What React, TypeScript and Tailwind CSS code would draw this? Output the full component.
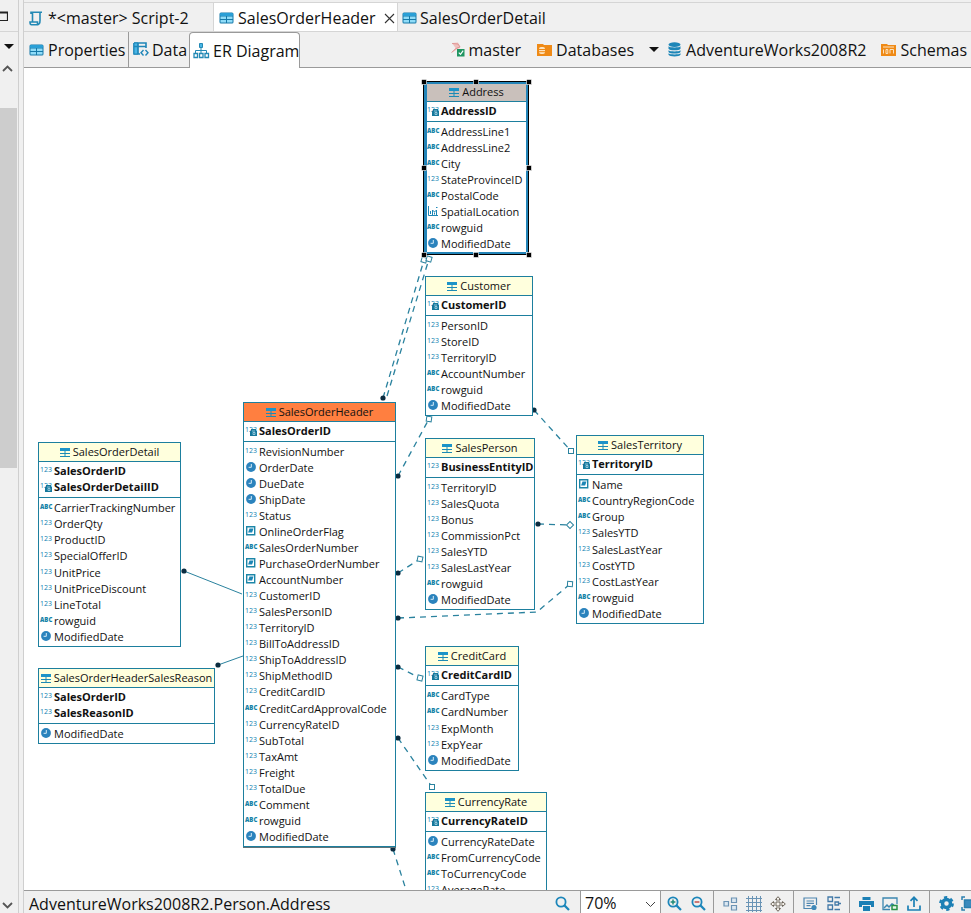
import React from 'react';

type ColumnType = 'num' | 'key' | 'text' | 'date' | 'user' | 'geo';

interface Column {
  name: string;
  type: ColumnType;
}

interface Entity {
  name: string;
  x: number;
  y: number;
  width: number;
  height: number;
  headerClass: string;
  selected?: boolean;
  keys: Column[];
  columns: Column[];
}

const col = (name: string, type: ColumnType): Column => ({ name, type });

const YELLOW = 'bg-[#ffffdd]';

const entities: Entity[] = [
  {
    name: 'Address', x: 401, y: 14, width: 103, height: 172, headerClass: 'bg-[#c9c0bb]', selected: true,
    keys: [col('AddressID', 'key')],
    columns: [
      col('AddressLine1', 'text'),
      col('AddressLine2', 'text'),
      col('City', 'text'),
      col('StateProvinceID', 'num'),
      col('PostalCode', 'text'),
      col('SpatialLocation', 'geo'),
      col('rowguid', 'text'),
      col('ModifiedDate', 'date'),
    ],
  },
  {
    name: 'Customer', x: 401, y: 208, width: 108, height: 140, headerClass: YELLOW,
    keys: [col('CustomerID', 'key')],
    columns: [
      col('PersonID', 'num'),
      col('StoreID', 'num'),
      col('TerritoryID', 'num'),
      col('AccountNumber', 'text'),
      col('rowguid', 'text'),
      col('ModifiedDate', 'date'),
    ],
  },
  {
    name: 'SalesOrderHeader', x: 219, y: 334, width: 153, height: 445, headerClass: 'bg-[#ff7f40]',
    keys: [col('SalesOrderID', 'key')],
    columns: [
      col('RevisionNumber', 'num'),
      col('OrderDate', 'date'),
      col('DueDate', 'date'),
      col('ShipDate', 'date'),
      col('Status', 'num'),
      col('OnlineOrderFlag', 'user'),
      col('SalesOrderNumber', 'text'),
      col('PurchaseOrderNumber', 'user'),
      col('AccountNumber', 'user'),
      col('CustomerID', 'num'),
      col('SalesPersonID', 'num'),
      col('TerritoryID', 'num'),
      col('BillToAddressID', 'num'),
      col('ShipToAddressID', 'num'),
      col('ShipMethodID', 'num'),
      col('CreditCardID', 'num'),
      col('CreditCardApprovalCode', 'text'),
      col('CurrencyRateID', 'num'),
      col('SubTotal', 'num'),
      col('TaxAmt', 'num'),
      col('Freight', 'num'),
      col('TotalDue', 'num'),
      col('Comment', 'text'),
      col('rowguid', 'text'),
      col('ModifiedDate', 'date'),
    ],
  },
  {
    name: 'SalesOrderDetail', x: 14, y: 374, width: 143, height: 205, headerClass: YELLOW,
    keys: [col('SalesOrderID', 'num'), col('SalesOrderDetailID', 'key')],
    columns: [
      col('CarrierTrackingNumber', 'text'),
      col('OrderQty', 'num'),
      col('ProductID', 'num'),
      col('SpecialOfferID', 'num'),
      col('UnitPrice', 'num'),
      col('UnitPriceDiscount', 'num'),
      col('LineTotal', 'num'),
      col('rowguid', 'text'),
      col('ModifiedDate', 'date'),
    ],
  },
  {
    name: 'SalesOrderHeaderSalesReason', x: 14, y: 600, width: 177, height: 76, headerClass: YELLOW,
    keys: [col('SalesOrderID', 'num'), col('SalesReasonID', 'num')],
    columns: [col('ModifiedDate', 'date')],
  },
  {
    name: 'SalesPerson', x: 401, y: 370, width: 110, height: 172, headerClass: YELLOW,
    keys: [col('BusinessEntityID', 'num')],
    columns: [
      col('TerritoryID', 'num'),
      col('SalesQuota', 'num'),
      col('Bonus', 'num'),
      col('CommissionPct', 'num'),
      col('SalesYTD', 'num'),
      col('SalesLastYear', 'num'),
      col('rowguid', 'text'),
      col('ModifiedDate', 'date'),
    ],
  },
  {
    name: 'SalesTerritory', x: 552, y: 367, width: 128, height: 189, headerClass: YELLOW,
    keys: [col('TerritoryID', 'key')],
    columns: [
      col('Name', 'user'),
      col('CountryRegionCode', 'text'),
      col('Group', 'text'),
      col('SalesYTD', 'num'),
      col('SalesLastYear', 'num'),
      col('CostYTD', 'num'),
      col('CostLastYear', 'num'),
      col('rowguid', 'text'),
      col('ModifiedDate', 'date'),
    ],
  },
  {
    name: 'CreditCard', x: 401, y: 578, width: 94, height: 125, headerClass: YELLOW,
    keys: [col('CreditCardID', 'key')],
    columns: [
      col('CardType', 'text'),
      col('CardNumber', 'text'),
      col('ExpMonth', 'num'),
      col('ExpYear', 'num'),
      col('ModifiedDate', 'date'),
    ],
  },
  {
    name: 'CurrencyRate', x: 401, y: 724, width: 122, height: 108, headerClass: YELLOW,
    keys: [col('CurrencyRateID', 'key')],
    columns: [
      col('CurrencyRateDate', 'date'),
      col('FromCurrencyCode', 'text'),
      col('ToCurrencyCode', 'text'),
      col('AverageRate', 'num'),
    ],
  },
];

interface Link {
  points: number[][];
  solid?: boolean;
  noDot?: boolean;
  angle?: number;
}

// the first point carries the dot, the last one the open square
const links: Link[] = [
  { points: [[359, 330], [400, 192]], angle: 16 },
  { points: [[363, 328], [405, 191]], angle: 16, noDot: true },
  { points: [[510, 342], [547, 383]], angle: 0 },
  { points: [[374, 408], [405, 351]], angle: 8 },
  { points: [[374, 505], [396, 491]], angle: 12 },
  { points: [[374, 550], [513, 544], [546, 516]], angle: 4 },
  { points: [[514, 456], [546, 457]], angle: 45 },
  { points: [[374, 599], [396, 610]], angle: 14 },
  { points: [[374, 670], [408, 719]], angle: 0 },
  { points: [[369, 781], [391, 850]], angle: 0 },
  { points: [[160, 503], [218, 526]], solid: true },
  { points: [[194, 597], [219, 588]], solid: true },
];

const TableIcon = () => (
  <svg width="15" height="12" viewBox="0 0 15 12" className="shrink-0">
    <rect x="0.5" y="0.5" width="14" height="11" rx="1.5" fill="#1679a8" />
    <rect x="1" y="1" width="13" height="3" rx="1" fill="#2a9fd6" />
    <path d="M1.5 4.5h5.5v2.5h-5.5zM8 4.5h5.5v2.5h-5.5zM1.5 8h5.5v2.5h-5.5zM8 8h5.5v2.5h-5.5z" fill="#8fdcf8" />
  </svg>
);

const SmallTableIcon = () => (
  <svg width="10" height="9" viewBox="0 0 10 9" className="shrink-0">
    <path d="M0 0h10v3H0z" fill="#1c93c8" />
    <path d="M0 5.5h10M0 8.5h10M5 3v6" stroke="#1c8ab5" />
  </svg>
);

const ScriptIcon = () => (
  <svg width="14" height="15" viewBox="0 0 14 15" className="shrink-0" fill="none" stroke="#2389b5" strokeWidth="1.6">
    <path d="M2 3V1.2h11M11 1.2v8.3M3.5 1.2v9.6M1 11h7.5v2.8H2.5C1.5 13.8 1 13 1 11zM8.5 13.6c1.5 0 2.5-.8 2.5-4" />
  </svg>
);

const DataIcon = () => (
  <svg width="16" height="15" viewBox="0 0 16 15" className="shrink-0" fill="none" stroke="#1f86b8">
    <path d="M1 1h12v5M1 1v11h6" strokeWidth="1.6" />
    <path d="M1 1h4v11H1z" fill="#49b6e6" />
    <path d="M1 4.5h12M5 1v11" strokeWidth="1.3" />
    <path d="M10.5 8 8 10.7l2.5 2.8M12.5 8l2.5 2.7-2.5 2.8" strokeWidth="1.4" />
  </svg>
);

const DiagramIcon = () => (
  <svg width="17" height="16" viewBox="0 0 17 16" className="shrink-0" fill="none" stroke="#2389b5">
    <path d="M6.5 0.5h3v4h-3z" fill="#49b6e6" />
    <path d="M8 5v5M2.5 10V7.5h11V10" />
    <path d="M1 10.5h3.5v4H1zM6.5 10.5H10v4H6.5zM12 10.5h3.5v4H12z" strokeWidth="1.3" />
  </svg>
);

const ServerIcon = () => (
  <svg width="15" height="15" viewBox="0 0 15 15" className="shrink-0">
    <path d="M2 1 8 .5l2.500 4.500-3 2-6 4 4-5z" fill="#efc0be" />
    <path d="M2 1.500l6 .5 2 3-4 1.500-4.500 4" stroke="#d98b89" fill="none" strokeWidth="0.8" />
    <rect x="7" y="7" width="7.5" height="7.5" fill="#1f9561" />
    <path d="m8.8 10.6 1.7 1.7 2.7-3.6" stroke="#fff" fill="none" strokeWidth="1.2" />
  </svg>
);

const DatabasesIcon = () => (
  <svg width="15" height="13" viewBox="0 0 15 13" className="shrink-0">
    <path d="M0 1h6l1 1h8v11H0z" fill="#ef8a16" />
    <rect x="2" y="4" width="6" height="7" rx="2" fill="#fde3bf" />
    <path d="M2 6.5h6M2 8.7h6" stroke="#ef8a16" />
  </svg>
);

const DatabaseIcon = () => (
  <svg width="13" height="15" viewBox="0 0 13 15" className="shrink-0" fill="#1d86b8">
    <ellipse cx="6.5" cy="2.6" rx="6" ry="2.4" />
    <path d="M.5 4.2c1 1.6 11 1.6 12 0v2.6c-1 2-11 2-12 0zM.5 8.2c1 1.6 11 1.6 12 0v1.7c-1 2-11 2-12 0zM.5 11.2c1 1.6 11 1.6 12 0v1.6c-1 2.2-11 2.2-12 0z" />
  </svg>
);

const SchemasIcon = () => (
  <svg width="15" height="13" viewBox="0 0 15 13" className="shrink-0">
    <path d="M0 1h6l1 1h8v11H0z" fill="#ef8a16" />
    <path d="M2 4h11M2.5 6.5v4M5 6.5h1.8v4H5zM9 10.5v-4h3.5v4" stroke="#fde3bf" fill="none" />
  </svg>
);

const Caret = () => (
  <svg width="10" height="5" viewBox="0 0 10 5" className="shrink-0">
    <path d="M0 0h10L5 5z" fill="#111" />
  </svg>
);

const Magnifier = ({ sign }: { sign?: string }) => (
  <svg width="15" height="15" viewBox="0 0 15 15" fill="none" stroke="#1c86ba" strokeWidth="1.8">
    <circle cx="6" cy="6" r="4.6" />
    <path d="m9.4 9.4 4.6 4.6" strokeWidth="2.2" />
    {sign === '+' && <path d="M3.6 6h4.8M6 3.6v4.8" stroke="#1d8a78" strokeWidth="1.5" />}
    {sign === '-' && <path d="M3.6 6h4.8" stroke="#c0504d" strokeWidth="1.5" />}
  </svg>
);

const ColumnIcon = ({ type }: { type: ColumnType }) => {
  switch (type) {
    case 'num':
      return <span className="text-[7px] leading-[10px] font-medium text-[#0f7fb2]">123</span>;
    case 'key':
      return (
        <span className="relative text-[7px] leading-[10px] font-medium text-[#0f7fb2]">
          123
          <svg width="7" height="7" viewBox="0 0 7 7" className="absolute top-1 left-[5px]">
            <path d="M0 2h1V0h5v2h1v5H0z" fill="#16789c" />
            <path d="M2 2h3M3 3.5h2v2H3z" stroke="#bfe3f0" fill="none" strokeWidth="0.7" />
          </svg>
        </span>
      );
    case 'text':
      return <span className="text-[6px] leading-[10px] font-black text-[#1583a8]">ABC</span>;
    case 'date':
      return (
        <svg width="10" height="10" viewBox="0 0 10 10" className="ml-px">
          <circle cx="5" cy="5" r="4.9" fill="#2b83bd" />
          <path d="M5.3 2v3.3H2.6" stroke="#d8edf8" fill="none" />
        </svg>
      );
    case 'user':
      return (
        <svg width="10" height="10" viewBox="0 0 10 10" className="ml-px">
          <path d="M.7.7h8v8h-8z" fill="#fff" stroke="#1c86a8" strokeWidth="1.400" />
          <path d="M3.5 2.500h4L6.100 6.500h-4z" fill="#1c86b5" />
        </svg>
      );
    default:
      return (
        <svg width="10" height="10" viewBox="0 0 10 10" className="ml-px" fill="none" stroke="#1c86b5">
          <path d="M.5 0v9.5H10M2.5 8V5M4.5 9V4l2 2 2-2v5M6.5 6.5v2M8 1.5h1.5" />
        </svg>
      );
  }
};

const ColumnRow = ({ column }: { column: Column }) => (
  <li className="flex h-4 items-center">
    <span className="flex h-3 w-[14px] shrink-0 items-start">
      <ColumnIcon type={column.type} />
    </span>
    <span className="whitespace-nowrap">{column.name}</span>
  </li>
);

const EntityCard = ({ entity }: { entity: Entity }) => {
  const line = 'border-[#1d7f9e]';
  return (
    <section
      className={`absolute flex flex-col border bg-white text-[11px] leading-4 ${line} ${
        entity.selected ? 'outline-3 outline-[#2384b8] -outline-offset-2' : ''
      } ${entity.name === 'SalesOrderHeader' ? 'shadow-[0_1px_0_#5f7378]' : ''}`}
      style={{ left: entity.x, top: entity.y, width: entity.width, height: entity.height }}
    >
      <h2 className={`flex h-[19px] shrink-0 items-center justify-center gap-[3px] border-b ${line} ${entity.headerClass}`}>
        <SmallTableIcon />
        <span>{entity.name}</span>
      </h2>
      <ul className={`shrink-0 border-b pt-px pb-[2px] pl-px font-bold ${line}`}>
        {entity.keys.map((column) => (
          <ColumnRow key={column.name} column={column} />
        ))}
      </ul>
      <ul className="flex flex-1 flex-col justify-between pt-[2px] pb-px pl-px">
        {entity.columns.map((column) => (
          <ColumnRow key={column.name} column={column} />
        ))}
      </ul>
    </section>
  );
};

const Links = () => (
  <svg className="absolute inset-0 h-full w-full" fill="none" stroke="#2a829e">
    {links.map((link, i) => {
      const [sx, sy] = link.points[0];
      const [ex, ey] = link.points[link.points.length - 1];
      return (
        <g key={i}>
          <polyline
            points={link.points.map((p) => p.join(',')).join(' ')}
            strokeDasharray={link.solid ? undefined : '6 5'}
            strokeWidth={link.solid ? 1 : 1.3}
          />
          {!link.noDot && <circle cx={sx} cy={sy} r="2.6" fill="#0b2c40" stroke="none" />}
          {!link.solid && (
            <rect
              x={ex - 2.5}
              y={ey - 2.5}
              width="5"
              height="5"
              fill="#fff"
              transform={`rotate(${link.angle} ${ex} ${ey})`}
            />
          )}
        </g>
      );
    })}
  </svg>
);

// selection frame with its eight grab handles
const Selection = () => {
  const xs = [400, 452, 505];
  const ys = [14, 100, 187];
  return (
    <svg className="absolute inset-0 h-full w-full">
      <rect x="399.5" y="13.5" width="105" height="173" fill="none" stroke="#000" />
      {xs.map((x) =>
        ys.map((y) =>
          x === 452 && y === 100 ? null : (
            <rect key={`${x}-${y}`} x={x - 2.5} y={y - 2.5} width="5" height="5" fill="#000" stroke="#fff" strokeWidth="0.6" />
          )
        )
      )}
    </svg>
  );
};

const Sidebar = () => (
  <aside className="flex w-[19px] shrink-0 flex-col border-r border-[#cfcfcf] bg-[#f0f0f0]">
    <div className="flex h-8 items-center border-b border-[#d5d5d5]">
      <svg width="8" height="10" viewBox="0 0 8 10">
        <path d="M-3 1h10.5v8.5H-3M-3 2h10" fill="none" stroke="#222" strokeWidth="1.2" />
      </svg>
    </div>
    <button aria-label="View menu" className="flex h-7 items-center pl-1">
      <Caret />
    </button>
    <button aria-label="Scroll up" className="flex h-4 items-center pl-[2px]">
      <svg width="11" height="7" viewBox="0 0 11 7">
        <path d="m1 6 4.5-4.5L10 6" fill="none" stroke="#555" strokeWidth="1.8" />
      </svg>
    </button>
    <div className="mt-8 h-[360px] w-[17px] bg-[#cdcdcd]" />
    <button aria-label="Scroll down" className="mt-auto flex h-4 items-center pl-[2px]">
      <svg width="11" height="7" viewBox="0 0 11 7">
        <path d="m1 1 4.5 4.5L10 1" fill="none" stroke="#555" strokeWidth="1.8" />
      </svg>
    </button>
  </aside>
);

const EditorTabs = () => (
  <div className="flex h-[30px] shrink-0 border-y border-[#d5d5d5]">
    <button className="flex w-[190px] items-center gap-[5px] border-r border-[#d5d5d5] pt-[2px] pl-[5px]">
      <ScriptIcon />
      *&lt;master&gt; Script-2
    </button>
    <button className="flex w-[184px] items-center gap-1 border-r border-[#d5d5d5] bg-white pt-[2px] pl-[5px]">
      <TableIcon />
      SalesOrderHeader
      <svg width="11" height="11" viewBox="0 0 11 11" className="ml-1 shrink-0">
        <path d="m1 1 9 9M10 1l-9 9" stroke="#333" strokeWidth="1.1" />
      </svg>
    </button>
    <button className="flex items-center gap-[3px] pt-[2px] pl-1">
      <TableIcon />
      SalesOrderDetail
    </button>
  </div>
);

const ViewTabs = () => (
  <div className="flex h-9 shrink-0 border-b border-[#9a9a9a]">
    <button className="flex w-[105px] items-center gap-1 border-r border-[#9a9a9a] pl-[5px]">
      <TableIcon />
      Properties
    </button>
    <button className="flex w-[60px] items-center gap-[3px] pl-1">
      <DataIcon />
      Data
    </button>
    <button className="-mb-px flex w-[111px] items-center gap-[3px] rounded-t border border-b-0 border-[#9a9a9a] bg-white pl-[3px]">
      <DiagramIcon />
      ER Diagram
    </button>
    <nav className="ml-auto flex items-center pr-1">
      <a href="#master" className="flex items-center gap-1"><ServerIcon />master</a>
      <a href="#databases" className="ml-4 flex items-center gap-1"><DatabasesIcon />Databases</a>
      <button aria-label="Choose database" className="mx-[9px] ml-[15px]"><Caret /></button>
      <a href="#database" className="flex items-center gap-[5px]"><DatabaseIcon />AdventureWorks2008R2</a>
      <a href="#schemas" className="ml-[15px] flex items-center gap-1"><SchemasIcon />Schemas</a>
    </nav>
  </div>
);

const Tool = ({ label, children }: { label: string; children: React.ReactNode }) => (
  <button aria-label={label} className="flex h-full w-6 items-center justify-center pt-[3px]">{children}</button>
);

const Divider = () => <span className="mr-1 ml-[3px] h-full w-px bg-[#9a9a9a]" />;

const StatusBar = () => (
  <footer className="flex h-[23px] shrink-0 items-center border-t border-[#9a9a9a]">
    <span className="mr-auto pt-[3px] pl-[5px]">AdventureWorks2008R2.Person.Address</span>
    <Tool label="Search"><Magnifier /></Tool>
    <div className="relative mr-px ml-1.5 h-full w-[81px] border-x border-[#9a9a9a] bg-white">
      <select aria-label="Zoom level" defaultValue="70%" className="h-full w-full appearance-none bg-white pt-[2px] pl-1">
        <option>70%</option>
      </select>
      <svg width="11" height="7" viewBox="0 0 11 7" className="pointer-events-none absolute top-[10px] right-1">
        <path d="m1 1 4.5 4.5L10 1" fill="none" stroke="#444" />
      </svg>
    </div>
    <Tool label="Zoom in"><Magnifier sign="+" /></Tool>
    <Tool label="Zoom out"><Magnifier sign="-" /></Tool>
    <Divider />
    <Tool label="Arrange">
      <svg width="15" height="14" viewBox="0 0 15 14" fill="#dbe7f1" stroke="#6c93b4" strokeWidth="1.2">
        <path d="M1 4.5h4.5V9H1zM8.5 1h5v4.500h-5zM8.500 8.500h5V13h-5z" />
      </svg>
    </Tool>
    <Tool label="Grid">
      <svg width="16" height="16" viewBox="0 0 16 16" stroke="#6a94b5" strokeWidth="1">
        <path d="M2.500 0v16M6.500 0v16M10.500 0v16M14.500 0v16M0 2.500h16M0 6.500h16M0 10.500h16M0 14.500h16" />
      </svg>
    </Tool>
    <Tool label="Move">
      <svg width="16" height="16" viewBox="0 0 16 16" fill="#f7f4ee" stroke="#6d665c">
        <path d="M8 .7 5.500 3.500H7V7H3.500V5.500L.7 8l2.800 2.500V9H7v3.500H5.500L8 15.300l2.500-2.800H9V9h3.500v1.500L15.300 8l-2.800-2.500V7H9V3.500h1.500z" />
      </svg>
    </Tool>
    <Divider />
    <Tool label="Notes">
      <svg width="15" height="14" viewBox="0 0 15 14" fill="none" stroke="#4f86b0" strokeWidth="1.2">
        <path d="M9 11.500H1V1h12.500v7M3.500 4h7.500M3.500 6.300h7.500M3.500 8.600h4" />
        <circle cx="11" cy="10.500" r="2.600" fill="#3f88b8" stroke="none" />
      </svg>
    </Tool>
    <Tool label="Outline">
      <svg width="14" height="15" viewBox="0 0 14 15" fill="none" stroke="#4279a8" strokeWidth="1.3">
        <path d="M1 1h4.500v4.500H1zM1 9h4.500v4.500H1zM7.500 1.500H13M8 6h3.500v3H8zM11.500 7.500H14M7.500 13.500H13" />
      </svg>
    </Tool>
    <Divider />
    <Tool label="Print">
      <svg width="15" height="14" viewBox="0 0 15 14">
        <path d="M3.500 0h8v3h-8zM0 4h15v6h-3V8H3v2H0zM4 9h7v5H4z" fill="#1c80b5" />
      </svg>
    </Tool>
    <Tool label="Export image">
      <svg width="16" height="14" viewBox="0 0 16 14" fill="none">
        <path d="M8 12.500H1V1h14v6" stroke="#3c87b0" strokeWidth="1.300" />
        <path d="m2 11 3-3 2 2 3-3 2 1" stroke="#3c87b0" strokeWidth="1.500" />
        <path d="M10 8.500h5v4h-5z" fill="#e8f7e8" stroke="#279045" strokeWidth="1.500" />
      </svg>
    </Tool>
    <Tool label="Upload">
      <svg width="14" height="15" viewBox="0 0 14 15" fill="none" stroke="#1c80b5" strokeWidth="1.700">
        <path d="M1 9.500V14h12V9.500M7 11V1.500M3.500 4.800 7 1.300l3.500 3.500" />
      </svg>
    </Tool>
    <Divider />
    <Tool label="Settings">
      <svg width="15" height="15" viewBox="0 0 15 15">
        <circle cx="7.500" cy="7.500" r="4" fill="none" stroke="#1c80b5" strokeWidth="3.500" />
        <circle cx="7.500" cy="7.500" r="6.300" fill="none" stroke="#1c80b5" strokeWidth="2.200" strokeDasharray="3.300 3.300" />
      </svg>
    </Tool>
    <button aria-label="Fit to window" className="w-[13px] overflow-hidden pt-[3px] pl-[3px]">
      <svg width="15" height="15" viewBox="0 0 15 15" fill="none" stroke="#2a7fae" strokeWidth="1.500" className="max-w-none">
        <path d="M1 4V1h3M1 11v3h3M11 1h3v3" />
        <path d="M3.500 4h8v7.500h-8z" fill="#3a8abd" />
      </svg>
    </button>
  </footer>
);

const App: React.FC = () => {
  return (
    <div className="flex h-screen overflow-hidden bg-[#f0f0f0] font-['Open_Sans','Noto_Sans',sans-serif] text-base leading-5 text-[#111]">
      <Sidebar />
      <div className="ml-1 flex min-w-0 flex-1 flex-col border-l border-[#cfcfcf] pt-[2px] whitespace-nowrap">
        <EditorTabs />
        <ViewTabs />
        <main className="relative min-h-0 flex-1 overflow-hidden bg-white">
          <Links />
          {entities.map((entity) => (
            <EntityCard key={entity.name} entity={entity} />
          ))}
          <Selection />
        </main>
        <StatusBar />
      </div>
    </div>
  );
};

export default App;
